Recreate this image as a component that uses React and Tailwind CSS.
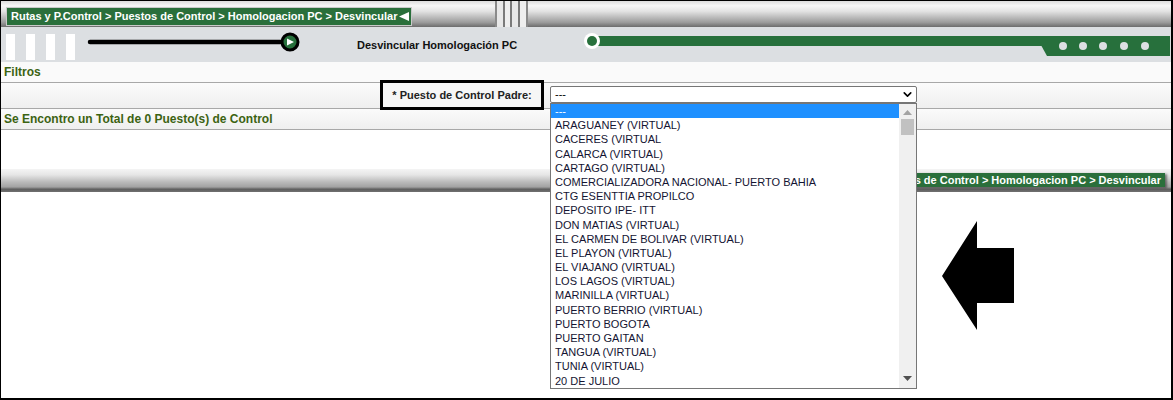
import { ChevronDown } from "lucide-react";

const opciones = [
  "---",
  "ARAGUANEY (VIRTUAL)",
  "CACERES (VIRTUAL",
  "CALARCA (VIRTUAL)",
  "CARTAGO (VIRTUAL)",
  "COMERCIALIZADORA NACIONAL- PUERTO BAHIA",
  "CTG ESENTTIA PROPILCO",
  "DEPOSITO IPE- ITT",
  "DON MATIAS (VIRTUAL)",
  "EL CARMEN DE BOLIVAR (VIRTUAL)",
  "EL PLAYON (VIRTUAL)",
  "EL VIAJANO (VIRTUAL)",
  "LOS LAGOS (VIRTUAL)",
  "MARINILLA (VIRTUAL)",
  "PUERTO BERRIO (VIRTUAL)",
  "PUERTO BOGOTA",
  "PUERTO GAITAN",
  "TANGUA (VIRTUAL)",
  "TUNIA (VIRTUAL)",
  "20 DE JULIO",
];

const ruta = "Rutas y P.Control > Puestos de Control > Homologacion PC > Desvincular";

function Grip() {
  return (
    <div className="flex h-full items-stretch ml-[83px]">
      <div className="w-[2px] bg-[#8a8a8a]" />
      <div className="w-[6px] bg-[#e8e8e8]" />
      <div className="w-[2px] bg-[#7a7a7a]" />
      <div className="w-[5px] bg-[#eeeeee]" />
      <div className="w-[2px] bg-[#7a7a7a]" />
      <div className="w-[6px] bg-[#e8e8e8]" />
      <div className="w-[2px] bg-[#7a7a7a]" />
      <div className="w-[6px] bg-[#eeeeee]" />
      <div className="w-[2px] bg-[#8a8a8a]" />
    </div>
  );
}

export default function App() {
  return (
    <div
      className="relative w-[1173px] h-[400px] overflow-hidden bg-white border-black border-l border-t border-r-2 border-b-2"
      style={{ fontFamily: '"Liberation Sans", Arial, sans-serif' }}
    >
      {/* barra superior con ruta */}
      <div className="flex items-start h-[26px] bg-[linear-gradient(to_bottom,#dcdcdc_0%,#f6f6f6_18%,#e2e2e2_40%,#b8b8b8_65%,#9c9c9c_82%,#6c6c6c_100%)]">
        <div className="ml-[5px] mt-[6px] h-[19px] flex items-center gap-[2px] bg-[#2a6f3b] border border-[#c9c9c9] pl-[4px] pr-[2px] text-white text-[11px] font-bold whitespace-nowrap">
          {ruta}
          <svg width="10" height="9" viewBox="0 0 10 9">
            <polygon points="0,4.5 10,0 10,9" fill="#fff" />
          </svg>
        </div>
        <Grip />
      </div>

      {/* franja de titulo */}
      <div className="flex items-start h-[35px] bg-[#dcdfe2]">
        <div className="flex gap-[11px] ml-[5px] mt-[7px]">
          <div className="w-[9px] h-[26px] bg-white" />
          <div className="w-[9px] h-[26px] bg-white" />
          <div className="w-[9px] h-[26px] bg-white" />
          <div className="w-[9px] h-[26px] bg-white" />
        </div>
        <svg width="220" height="30" viewBox="0 0 220 30" className="ml-[12px] mt-[2px]">
          <line x1="3" y1="13" x2="200" y2="13" stroke="#000" strokeWidth="4.5" strokeLinecap="round" />
          <circle cx="203" cy="13" r="8" fill="#27703c" stroke="#000" strokeWidth="3" />
          <polygon points="200,9.5 207,13 200,16.5" fill="#fff" />
        </svg>
        <div className="ml-[50px] mt-[10px] text-[11px] font-bold text-[#111] whitespace-nowrap">
          Desvincular Homologación PC
        </div>
        <svg width="587" height="34" viewBox="0 0 587 34" className="ml-[66px]">
          <rect x="10" y="9" width="577" height="10" fill="#27703c" />
          <polygon points="453,9 587,9 587,29 464,29" fill="#27703c" />
          <circle cx="9" cy="14" r="8" fill="#fff" />
          <circle cx="9" cy="14" r="5" fill="#27703c" />
          <circle cx="480" cy="19" r="4" fill="#dcdfe2" />
          <circle cx="500" cy="19" r="4" fill="#dcdfe2" />
          <circle cx="520" cy="19" r="4" fill="#dcdfe2" />
          <circle cx="541" cy="19" r="4" fill="#dcdfe2" />
          <circle cx="562" cy="19" r="4" fill="#dcdfe2" />
        </svg>
      </div>

      {/* Filtros */}
      <div className="h-[21px] flex items-center pl-[3px] bg-[#fafafa] border-b border-[#a8a8a8] text-[12px] font-bold text-[#3c6312]">
        Filtros
      </div>

      {/* fila de filtro */}
      <div className="h-[26px] flex items-start bg-[linear-gradient(to_bottom,#fbfbfb,#efefef)] border-b border-[#a8a8a8]">
        <div className="ml-[379px] -mt-[3px] w-[164px] h-[30px] border-[3px] border-black flex items-center justify-center text-[11px] font-bold text-[#222] bg-[#f6f6f6]">
          * Puesto de Control Padre:
        </div>
        <div className="ml-[6px] mt-[3px] w-[367px] h-[17px] border border-[#767676] rounded-[2px] bg-white flex items-center justify-between pl-[4px] pr-[2px] text-[11px] text-black">
          <span>---</span>
          <ChevronDown size={13} strokeWidth={3} />
        </div>
      </div>

      {/* total */}
      <div className="h-[21px] flex items-center pl-[3px] bg-[linear-gradient(to_bottom,#fbfbfb,#efefef)] border-b border-[#a8a8a8] text-[12px] font-bold text-[#3c6312]">
        Se Encontro un Total de 0 Puesto(s) de Control
      </div>

      {/* barra inferior */}
      <div className="mt-[39px] h-[23px] flex items-start justify-end pr-[6px] bg-[linear-gradient(to_bottom,#f4f4f4_0%,#e6e6e6_25%,#bcbcbc_55%,#a2a2a2_78%,#5e5e5e_88%,#707070_100%)]">
        <div className="mt-[4px] h-[14px] flex items-center bg-[#2a6f3b] pl-[4px] pr-[4px] text-white text-[11px] font-bold whitespace-nowrap shadow-[2px_1px_2px_rgba(0,0,0,0.45)]">
          {ruta}
        </div>
      </div>

      {/* lista desplegada */}
      <div className="absolute left-[549px] top-[102px] w-[367px] h-[286px] border border-[#767676] bg-white flex">
        <div className="flex-1 flex flex-col">
          {opciones.map((op, i) => (
            <div
              key={op}
              className={`h-[14.2px] leading-[14.2px] pl-[4px] text-[11px] whitespace-nowrap ${
                i === 0 ? "bg-[#1e90ff] text-white" : "text-[#141432]"
              }`}
            >
              {op}
            </div>
          ))}
        </div>
        <div className="w-[17px] bg-[#f0f0f0] flex flex-col items-center">
          <svg width="9" height="6" viewBox="0 0 9 6" className="mt-[6px]">
            <polygon points="0,5 4.5,0 9,5" fill="#a3a3a3" />
          </svg>
          <div className="mt-[3px] w-[13px] h-[16px] bg-[#c1c1c1]" />
          <div className="flex-1" />
          <svg width="9" height="6" viewBox="0 0 9 6" className="mb-[6px]">
            <polygon points="0,0 9,0 4.5,5" fill="#505050" />
          </svg>
        </div>
      </div>

      {/* flecha */}
      <svg width="74" height="110" viewBox="0 0 74 110" className="absolute left-[941px] top-[220px]">
        <polygon points="0,55 35,0 35,27 72,27 72,82 35,82 35,109" fill="#000" />
      </svg>
    </div>
  );
}
